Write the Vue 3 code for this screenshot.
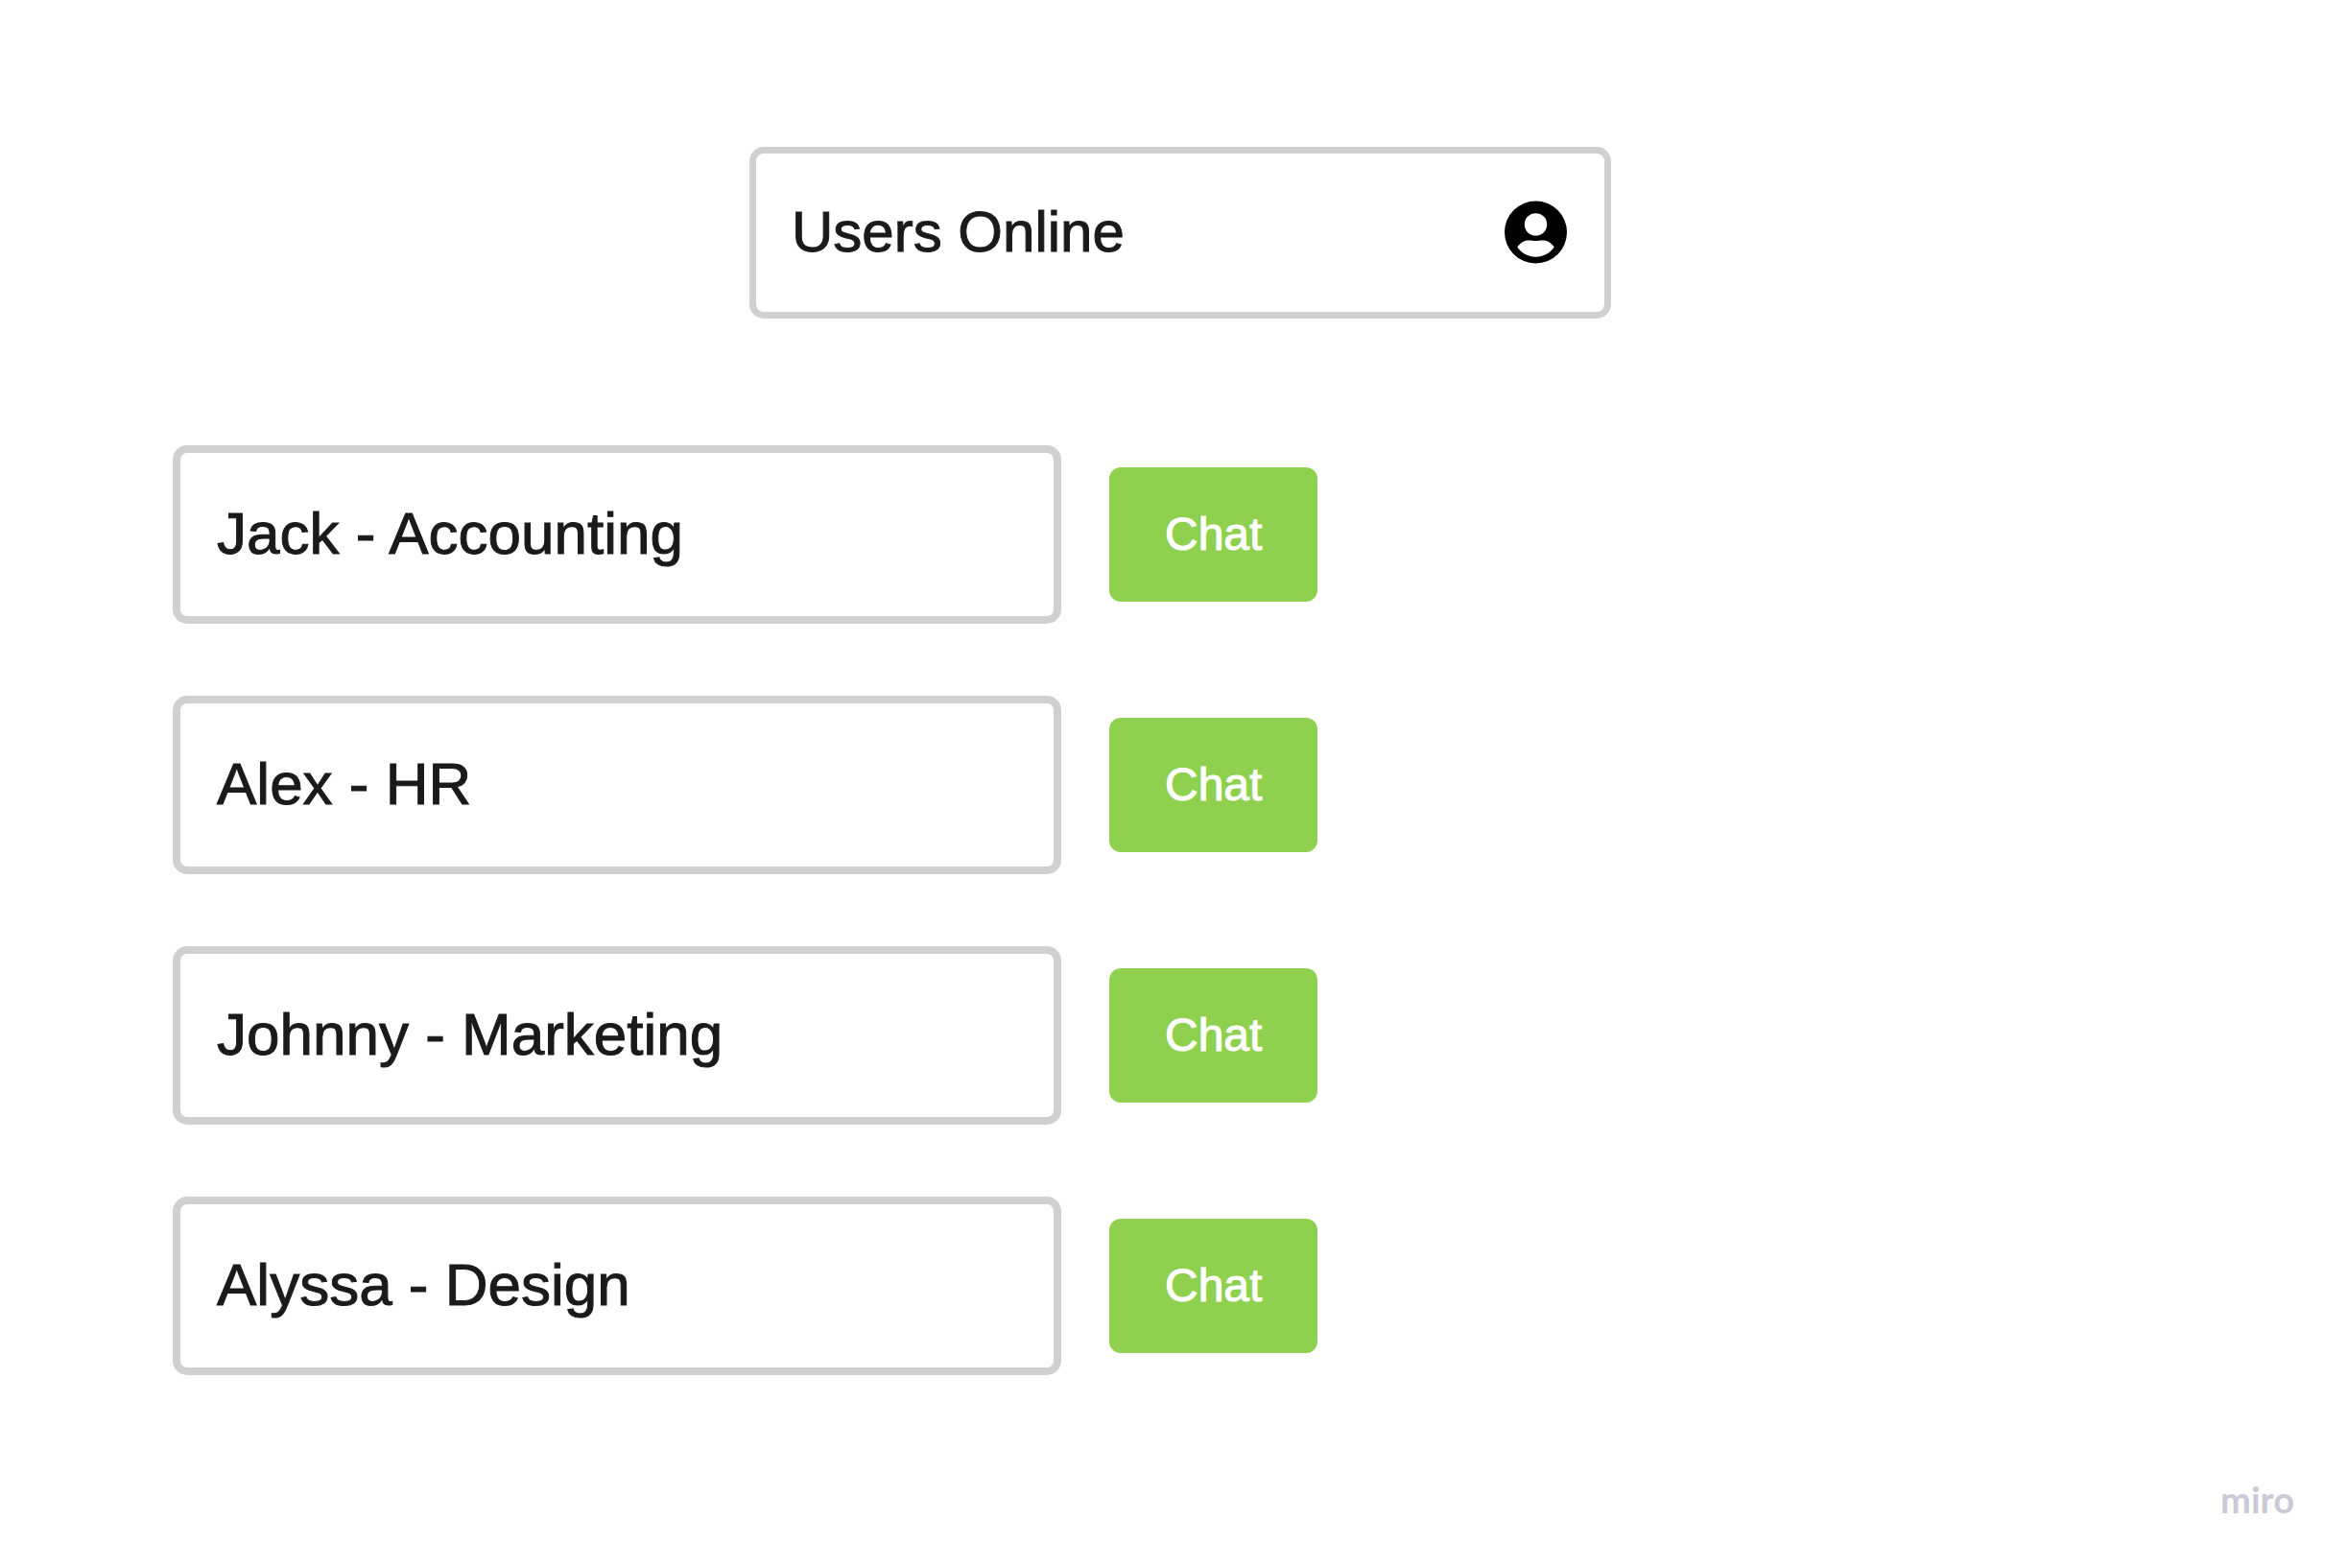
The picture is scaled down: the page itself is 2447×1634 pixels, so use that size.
<script setup>
const users = [
  { name: 'Jack', department: 'Accounting' },
  { name: 'Alex', department: 'HR' },
  { name: 'Johnny', department: 'Marketing' },
  { name: 'Alyssa', department: 'Design' },
]
</script>

<template>
  <div class="page">
    <main class="content">
      <header class="title-box">
        <h1 class="title">Users Online</h1>
        <svg class="account" viewBox="2 2 20 20" aria-hidden="true">
          <circle cx="12" cy="12" r="10" fill="#000" />
          <circle cx="12" cy="9.5" r="3.6" fill="#fff" />
          <path
            d="M6.1 16.8C7.1 15.3 8.3 14.65 9.7 14.65c.9 0 1.5.15 2.3.15s1.4-.15 2.3-.15c1.4 0 2.6.65 3.6 2.15C16.6 18.8 14.4 19.9 12 19.9S7.4 18.8 6.1 16.8Z"
            fill="#fff"
          />
        </svg>
      </header>

      <ul class="users">
        <li v-for="user in users" :key="user.name" class="user">
          <span class="card">{{ user.name }} - {{ user.department }}</span>
          <button type="button" class="chat" :aria-label="`Chat with ${user.name}`">Chat</button>
        </li>
      </ul>
    </main>

    <footer class="brand">miro</footer>
  </div>
</template>

<style>
body {
  margin: 0;
  background: #fff;
}
</style>

<style scoped>
.page {
  box-sizing: border-box;
  min-height: 100vh;
  padding-top: 153px;
  font-family: 'Liberation Sans', Arial, sans-serif;
  color: #1a1a1a;
}

.content {
  padding: 0 167px 0 180px;
  -webkit-text-stroke: 1px currentColor;
}

.title-box {
  box-sizing: border-box;
  display: flex;
  align-items: center;
  justify-content: space-between;
  max-width: 898px;
  margin: 0 auto 132px;
  padding: 47px 39px 48px 37px;
  border: 7px solid #d0d0d0;
  border-radius: 15px;
}

.title {
  margin: 0;
  font-size: 60px;
  font-weight: 400;
  line-height: 68px;
}

.account {
  flex: none;
  width: 65px;
  height: 70px;
}

.users {
  display: flex;
  flex-direction: column;
  gap: 75px;
  margin: 0;
  padding: 0;
  list-style: none;
}

.user {
  display: flex;
  align-items: center;
  gap: 50px;
}

.card {
  box-sizing: border-box;
  flex: 0 1 926px;
  padding: 49px 38px 51px;
  border: 8px solid #d0d0d0;
  border-radius: 15px;
  font-size: 62px;
  line-height: 70px;
}

.chat {
  flex: none;
  padding: 42px 58px;
  border: 0;
  border-radius: 12px;
  background: #8fd14f;
  color: #fff;
  font-family: inherit;
  font-size: 48px;
  line-height: 56px;
  -webkit-text-stroke: 1px currentColor;
  cursor: pointer;
}

.brand {
  margin-top: 106px;
  padding-right: 56px;
  font-family: Lato, sans-serif;
  font-size: 38px;
  font-weight: 700;
  line-height: 46px;
  text-align: right;
  color: #cac9d6;
}
</style>
